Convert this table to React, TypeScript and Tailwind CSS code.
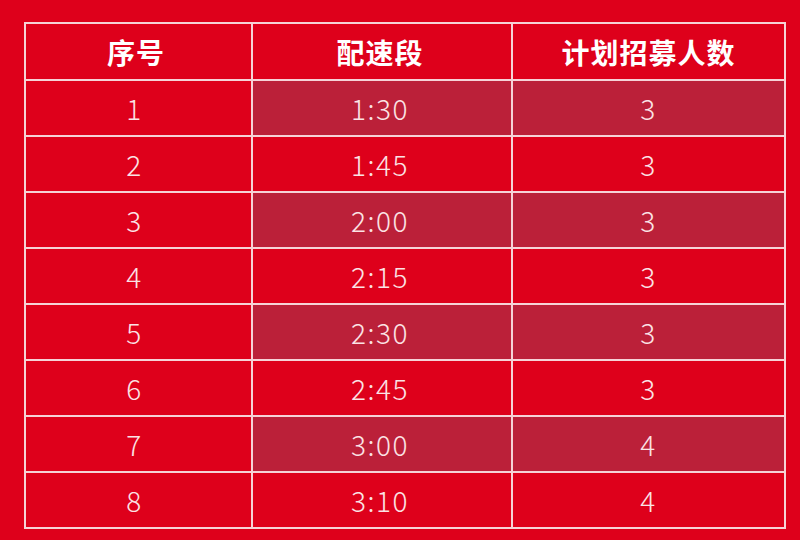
const rows = [
  { no: '1', pace: '1:30', count: '3' },
  { no: '2', pace: '1:45', count: '3' },
  { no: '3', pace: '2:00', count: '3' },
  { no: '4', pace: '2:15', count: '3' },
  { no: '5', pace: '2:30', count: '3' },
  { no: '6', pace: '2:45', count: '3' },
  { no: '7', pace: '3:00', count: '4' },
  { no: '8', pace: '3:10', count: '4' },
]

const font = { fontFamily: '"Noto Sans CJK SC", "Noto Sans", sans-serif' }

const cell = 'flex items-center justify-center border-r-2 border-b-2 border-[#f6d2d7]'
const body = 'h-[56px] text-[#fbe3e5] text-[28px] font-light tracking-[1.5px]'

export default function App() {
  return (
    <main className="w-[800px] h-[540px] bg-[#de001b] pt-[22px] pl-[24px]" style={font}>
      <div className="grid w-[762px] grid-cols-[227px_260px_273px] border-l-2 border-t-2 border-[#f6d2d7]">
        {/* Header */}
        <div className={`${cell} h-[57px] pr-[5px] text-white text-[28px] font-bold tracking-[1px]`}>序号</div>
        <div className={`${cell} h-[57px] pr-[4px] text-white text-[28px] font-bold tracking-[1px]`}>配速段</div>
        <div className={`${cell} h-[57px] text-white text-[28px] font-bold tracking-[1px]`}>计划招募人数</div>

        {/* Body rows */}
        {rows.map((r, i) => {
          const shade = i % 2 === 0 ? 'bg-[#bb2039]' : 'bg-[#de001b]'
          return [
            <div key={`${r.no}-a`} className={`${cell} ${body} pr-[8px]`}>
              {r.no}
            </div>,
            <div key={`${r.no}-b`} className={`${cell} ${body} pr-[4px] ${shade}`}>
              {r.pace}
            </div>,
            <div key={`${r.no}-c`} className={`${cell} ${body} ${shade}`}>
              {r.count}
            </div>,
          ]
        })}
      </div>
    </main>
  )
}
